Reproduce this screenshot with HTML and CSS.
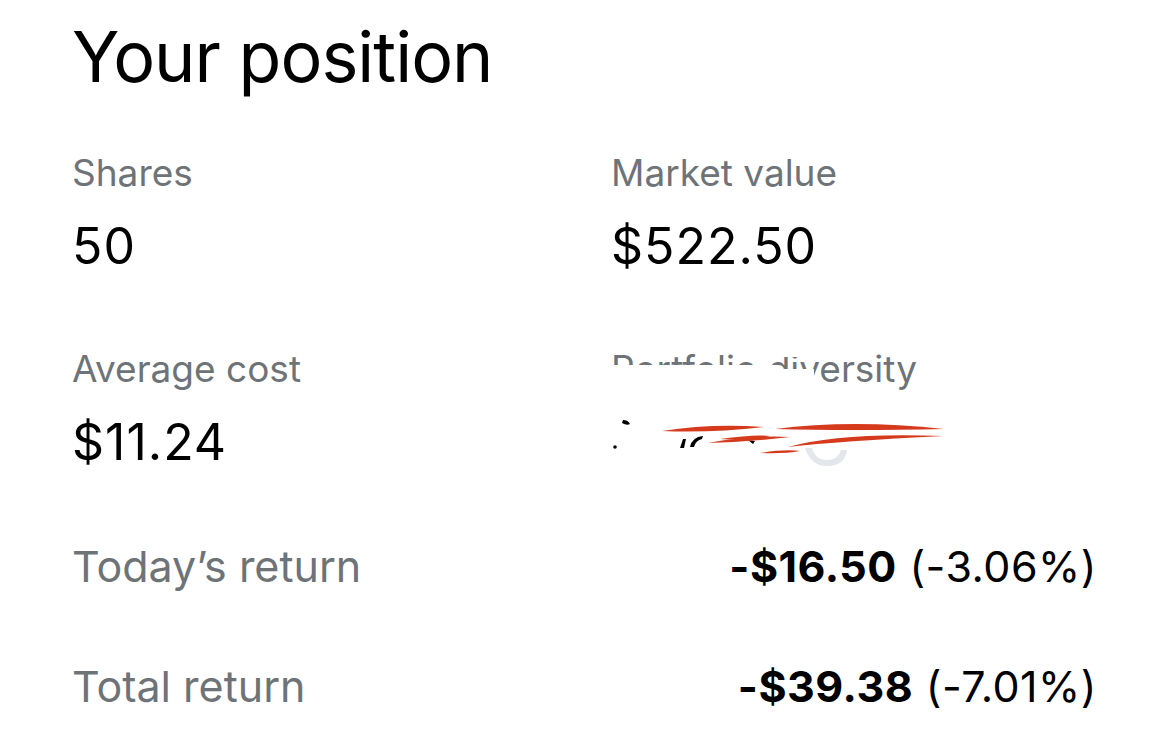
FILE: index.html
```html
<!DOCTYPE html>
<html lang="en">
<head>
    <meta charset="UTF-8">
    <meta name="viewport" content="width=device-width, initial-scale=1.0">
    <title>Your position</title>
    <link rel="stylesheet" href="styles.css">
</head>
<body>
    <div class="position">
        <h1>Your position</h1>

        <div class="stats">
            <div class="stat">
                <div class="stat-label">Shares</div>
                <div class="stat-value">50</div>
            </div>
            <div class="stat">
                <div class="stat-label">Market value</div>
                <div class="stat-value">$522.50</div>
            </div>
            <div class="stat">
                <div class="stat-label">Average cost</div>
                <div class="stat-value">$11.24</div>
            </div>
            <div class="stat stat-hidden">
                <div class="stat-label">Portfolio diversity</div>
                <div class="stat-value">&nbsp;</div>
                <!-- scribbled over by hand -->
                <svg class="scribble" width="360" height="150" viewBox="600 335 360 150">
                    <g fill="#fff">
                        <rect x="600" y="365" width="178" height="22"/>
                        <rect x="600" y="335" width="10" height="50"/>
                        <rect x="692" y="345" width="40" height="9"/>
                        <rect x="772" y="340" width="58" height="17"/>
                        <rect x="778" y="369" width="36" height="16"/>
                    </g>
                    <g fill="#000">
                        <path d="M623 420 q5 0 7 4 q-3 2 -8 -1 z"/>
                        <circle cx="615" cy="447" r="1.8"/>
                        <path d="M680 448 l3 -9 l3 0 l-2 9 z"/>
                        <path d="M690 447 q2 -10 13 -11 l-1 3 q-6 1 -8 8 z"/>
                        <path d="M748 440 l7 1 l-2 3 z"/>
                    </g>
                    <path d="M805 448 q6 18 22 18 q18 0 20 -16 l-6 0 q-3 10 -14 10 q-12 0 -15 -12 z" fill="#e3e6ea"/>
                    <g fill="#d63a1c">
                        <path d="M662 431 Q712 423 764 427 Q712 433 662 431 z"/>
                        <path d="M708 443 Q750 435 790 437 Q750 442 708 443 z"/>
                        <path d="M775 429 Q852 419 944 429 Q852 431 775 429 z"/>
                        <path d="M788 447 Q840 432 944 436 Q840 441 788 447 z"/>
                        <path d="M720 439 Q755 434 770 436 Q750 441 720 439 z"/>
                        <path d="M760 453 Q785 449 800 451 Q785 454 760 453 z"/>
                    </g>
                </svg>
            </div>
        </div>

        <div class="returns">
            <div class="return-row">
                <span class="return-label">Today’s return</span>
                <span class="return-value"><b>-$16.50</b> (-3.06%)</span>
            </div>
            <div class="return-row">
                <span class="return-label">Total return</span>
                <span class="return-value"><b>-$39.38</b> (-7.01%)</span>
            </div>
        </div>
    </div>
</body>
</html>
```

FILE: styles.css
```css
body {
    margin: 0;
    background: #fff;
    color: #000;
    font-family: Inter, "Noto Sans", sans-serif;
}

.position {
    padding: 15px 73px 0 72px;
}

h1 {
    margin: 0;
    font-size: 70px;
    font-weight: 400;
    line-height: 84px;
    letter-spacing: -1px;
}

.stats {
    display: grid;
    grid-template-columns: 539px 1fr;
    row-gap: 72px;
    margin-top: 52px;
}

.stat {
    display: flex;
    flex-direction: column;
    gap: 22px;
}

.stat-hidden {
    position: relative;
}

.stat-label {
    font-size: 37px;
    line-height: 44px;
    color: #6e7378;
}

.stat-value {
    font-size: 50px;
    line-height: 58px;
    letter-spacing: 1px;
}

.scribble {
    position: absolute;
    left: -11px;
    top: -12px;
}

.returns {
    display: flex;
    flex-direction: column;
    gap: 66px;
    margin-top: 68px;
}

.return-row {
    display: flex;
    justify-content: space-between;
    align-items: baseline;
    font-size: 43px;
    line-height: 54px;
}

.return-label {
    color: #6e7378;
}

.return-value {
    letter-spacing: 0.5px;
}

.return-value b {
    font-weight: 700;
}
```
